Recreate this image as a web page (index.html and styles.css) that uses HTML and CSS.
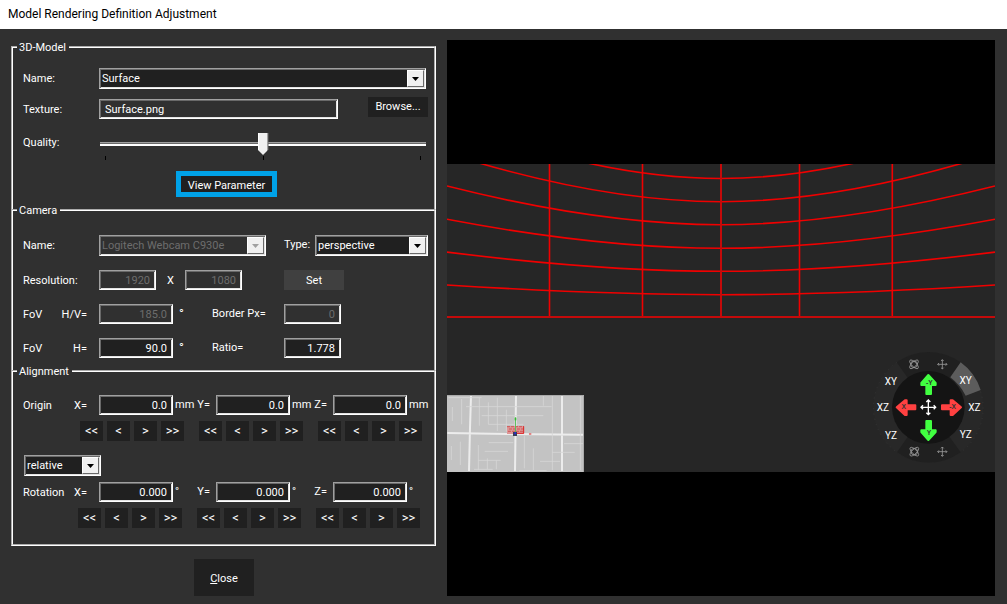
FILE: index.html
```html
<!DOCTYPE html>
<html lang="en">
<head>
<meta charset="utf-8">
<title>Model Rendering Definition Adjustment</title>
<link rel="stylesheet" href="styles.css">
</head>
<body>
<header class="titlebar"><h1>Model Rendering Definition Adjustment</h1></header>
<main class="dialog">
  <form class="settings">
    <fieldset class="group group-model">
      <legend>3D-Model</legend>
      <div class="row">
        <label class="field-label" for="model-name">Name:</label>
        <span class="combo combo-wide"><select id="model-name"><option>Surface</option></select><svg class="arrow" viewBox="0 0 7 4"><path d="M0 0h7L3.500 4z"/></svg></span>
      </div>
      <div class="row row-texture">
        <label class="field-label" for="texture">Texture:</label>
        <input class="box texture" id="texture" type="text" value="Surface.png">
        <button class="btn btn-browse" type="button">Browse...</button>
      </div>
      <div class="row row-quality">
        <label class="field-label" for="quality">Quality:</label>
        <div class="slider">
          <input id="quality" type="range" min="0" max="2" value="1">
          <div class="ticks"><i></i><i></i><i></i></div>
        </div>
      </div>
      <div class="row row-view"><button class="btn btn-view" type="button">View Parameter</button></div>
    </fieldset>

    <fieldset class="group group-camera">
      <legend>Camera</legend>
      <div class="row">
        <label class="field-label" for="camera-name">Name:</label>
        <span class="combo combo-camera"><select id="camera-name" disabled><option>Logitech Webcam C930e</option></select><svg class="arrow" viewBox="0 0 7 4"><path d="M0 0h7L3.500 4z"/></svg></span>
        <label class="type-label" for="type">Type:</label>
        <span class="combo combo-type"><select id="type"><option>perspective</option></select><svg class="arrow" viewBox="0 0 7 4"><path d="M0 0h7L3.500 4z"/></svg></span>
      </div>
      <div class="row">
        <label class="field-label" for="res-w">Resolution:</label>
        <input class="box num small" id="res-w" type="text" value="1920" disabled>
        <label class="times" for="res-h">X</label>
        <input class="box num small" id="res-h" type="text" value="1080" disabled>
        <button class="btn btn-set" type="button">Set</button>
      </div>
      <div class="row">
        <label class="field-label split" for="fov-hv"><span>FoV</span><span>H/V=</span></label>
        <input class="box num" id="fov-hv" type="text" value="185.0" disabled>
        <span class="degree">°</span>
        <label class="side-label" for="border-px">Border Px=</label>
        <input class="box num small" id="border-px" type="text" value="0" disabled>
      </div>
      <div class="row">
        <label class="field-label split" for="fov-h"><span>FoV</span><span>H=</span></label>
        <input class="box num dark" id="fov-h" type="text" value="90.0">
        <span class="degree">°</span>
        <label class="side-label" for="ratio">Ratio=</label>
        <input class="box num small dark" id="ratio" type="text" value="1.778">
      </div>
    </fieldset>

    <fieldset class="group group-align">
      <legend>Alignment</legend>
      <div class="row">
        <label class="field-label split" for="ox"><span>Origin</span><span>X=</span></label>
        <input class="box num dark" id="ox" type="text" value="0.0">
        <label class="unit" for="oy"><span>mm</span><span>Y=</span></label>
        <input class="box num dark" id="oy" type="text" value="0.0">
        <label class="unit" for="oz"><span>mm</span><span>Z=</span></label>
        <input class="box num dark" id="oz" type="text" value="0.0">
        <span class="unit unit-last">mm</span>
      </div>
      <div class="row steps">
        <div class="step"><button type="button">&lt;&lt;</button><button type="button">&lt;</button><button type="button">&gt;</button><button type="button">&gt;&gt;</button></div>
        <div class="step"><button type="button">&lt;&lt;</button><button type="button">&lt;</button><button type="button">&gt;</button><button type="button">&gt;&gt;</button></div>
        <div class="step"><button type="button">&lt;&lt;</button><button type="button">&lt;</button><button type="button">&gt;</button><button type="button">&gt;&gt;</button></div>
      </div>
      <div class="row row-mode">
        <span class="combo combo-mode"><select aria-label="Rotation mode"><option>relative</option></select><svg class="arrow" viewBox="0 0 7 4"><path d="M0 0h7L3.500 4z"/></svg></span>
      </div>
      <div class="row row-rotation">
        <label class="field-label split" for="rx"><span>Rotation</span><span>X=</span></label>
        <input class="box num dark" id="rx" type="text" value="0.000">
        <label class="unit" for="ry"><span>°</span><span>Y=</span></label>
        <input class="box num dark" id="ry" type="text" value="0.000">
        <label class="unit" for="rz"><span>°</span><span>Z=</span></label>
        <input class="box num dark" id="rz" type="text" value="0.000">
        <span class="unit unit-last">°</span>
      </div>
      <div class="row steps steps-rotation">
        <div class="step"><button type="button">&lt;&lt;</button><button type="button">&lt;</button><button type="button">&gt;</button><button type="button">&gt;&gt;</button></div>
        <div class="step"><button type="button">&lt;&lt;</button><button type="button">&lt;</button><button type="button">&gt;</button><button type="button">&gt;&gt;</button></div>
        <div class="step"><button type="button">&lt;&lt;</button><button type="button">&lt;</button><button type="button">&gt;</button><button type="button">&gt;&gt;</button></div>
      </div>
    </fieldset>
    <button class="btn btn-close" type="button"><u>C</u>lose</button>
  </form>

  <section class="preview" aria-label="Model preview">
    <svg class="scene" viewBox="0 0 548 556">
      <defs>
        <clipPath id="band"><rect y="124" width="548" height="308"/></clipPath>
        <g id="atom" fill="none" stroke="#999" stroke-width="2.500">
          <ellipse rx="17" ry="7" transform="rotate(45)"/><ellipse rx="17" ry="7" transform="rotate(-45)"/><circle r="10"/>
        </g>
        <g id="move" fill="none" stroke="#999" stroke-width="2.500">
          <path d="M-14 0H14M0-14V14M-10-4L-14 0L-10 4M10-4L14 0L10 4M-4-10L0-14L4-10M-4 10L0 14L4 10"/>
        </g>
      </defs>
      <rect y="124" width="548" height="308" fill="#262626"/>
      <g clip-path="url(#band)" fill="none" stroke="#f00000" stroke-width="1.600">
        <path d="M0 80.400C91 115 183 138.500 274 138.500S457 115 548 80.400"/>
        <path d="M0 113.300C91 142.100 183 161.700 274 161.700S457 142.100 548 113.300"/>
        <path d="M0 146C91 169 183 184.700 274 184.700S457 169 548 146"/>
        <path d="M0 179.300C91 196.500 183 208.300 274 208.300S457 196.500 548 179.300"/>
        <path d="M0 212.100C91 223.500 183 231.300 274 231.300S457 223.500 548 212.100"/>
        <path d="M0 245C91 250.800 183 254.700 274 254.700S457 250.800 548 245"/>
        <path d="M102.500 124V277M195.500 124V277M352.500 124V277M445.300 124V277"/>
        <path stroke="#c40a0a" stroke-width="2" d="M274 124V277M0 277H548"/>
      </g>

      <g transform="translate(-7 345) scale(.33333)">
        <path fill="#c3c3c3" d="M21 30H432V261H21z"/>
        <path fill="none" stroke="#aaa" stroke-width="3" d="M21 31.500H430.500V261"/>
        <g fill="none" stroke="#ececec" stroke-width="6">
          <path d="M93 33L90 130L87 258M228 33L225 258M366 33V258M22 144L200 147L429 149"/>
        </g>
        <g fill="none" stroke="#d6d6d6" stroke-width="2.500">
          <path d="M25 38H125M78 65H335M125 92H310M145 118H250M146 173H220M134 199H204M115 226H182M102 253H158M238 257H320M372 176H429M337 202H404M300 229H360"/>
          <path d="M37 66V108M65 42V118M118 38V122M145 52V118M172 38V138M199 74V140M310 33V62M337 33V256M421 33V256M34 183V225M61 170V240M115 180V255M142 220V253M169 226V253M253 152V250M280 190V255"/>
        </g>
        <path fill="#dd9595" d="M201 123H252V147H201z"/>
        <path stroke="#cf5858" stroke-width="3" stroke-dasharray="9 3" d="M201 125H252M207 132H252M204 139H252"/>
        <path fill="none" stroke="#d22" stroke-width="3" d="M230 145H251V124M267 147H274"/>
        <path stroke="#5cc05c" stroke-width="3" d="M226.500 97V142"/>
        <path fill="#34bd34" d="M224 98h5v8h-5z"/>
        <path fill="#373b58" d="M219 141h12v12h-12z"/><path fill="#2b2bd8" d="M223 142h5v6h-5z"/>
      </g>

      <g transform="translate(418 305) scale(.33333)">
        <circle cx="190" cy="187" r="165" fill="#282828"/>
        <path fill="#202020" d="M190 187L95 52A165 165 0 0 1 287 52zM190 187L96 322A165 165 0 0 0 287 322z"/>
        <path fill="none" stroke="#343434" stroke-width="3" stroke-dasharray="3 13" d="M95 52A165 165 0 0 0 96 322M347 140A165 165 0 0 1 287 322"/>
        <path fill="#5c5c5c" d="M287 52A165 165 0 0 1 347 135L302 152Q286 120 256 97z"/>
        <circle cx="190" cy="187" r="109" fill="#141414"/>
        <g stroke-linejoin="round" stroke-width="6">
          <path fill="#41ff41" stroke="#41ff41" d="M190 90L212 114V120H198V147H184V120H169V114zM190 285L169 261V256H184V228H198V256H212V261z"/>
          <path fill="#ff4141" stroke="#ff4141" d="M95 187L120 166H125V181H151V193H125V210H120zM288 187L263 210H257V193H231V181H257V166H263z"/>
        </g>
        <g class="axis-letter"><text x="193" y="121">-Y</text><text x="192" y="270">Y</text><text x="116" y="193">X</text><text x="263" y="193">-X</text></g>
        <path fill="none" stroke="#fff" stroke-width="4" d="M169 187H211M190 166V208M174 181L168 187L174 193M206 181L212 187L206 193M184 171L190 165L196 171M184 203L190 209L196 203"/>
        <use href="#atom" x="147" y="58"/><use href="#move" x="232" y="58"/>
        <use href="#atom" x="148" y="320"/><use href="#move" x="232" y="320"/>
        <g class="plane-label"><text x="78" y="119">XY</text><text x="54" y="199">XZ</text><text x="78" y="281">YZ</text><text x="302" y="118">XY</text><text x="328" y="199">XZ</text><text x="302" y="278">YZ</text></g>
      </g>
    </svg>
  </section>
</main>
</body>
</html>
```
FILE: styles.css
```css
* { box-sizing: border-box; }

body {
  margin: 0;
  min-height: 100vh;
  display: flex;
  flex-direction: column;
  background: #303030;
  color: #fff;
  font: 11px/16px Roboto, Tahoma, sans-serif;
}

.titlebar { background: #fff; color: #000; height: 29px; padding: 5px 8px; }
.titlebar h1 { margin: 0; font: 12px/18px Roboto, "Segoe UI", sans-serif; }

.dialog { flex: 1; display: flex; gap: 11px; padding: 10px 12px 8px 11px; }
.settings { flex: 0 0 425px; display: flex; flex-direction: column; }

.group {
  margin: 0 0 -7px;
  padding: 0 0 0 10px;
  min-width: 0;
  border: 2px groove #fff;
  border-bottom: 0;
}
.group legend { margin-left: -6px; padding: 1px 3px 0 2px; height: 16px; }
.group-model { height: 170px; padding-top: 13px; }
.group-camera { height: 168px; padding-top: 17px; }
.group-align { height: 183px; padding-top: 16px; margin: 0; border-bottom: 2px groove #fff; }

.row { display: flex; align-items: center; height: 20px; margin-bottom: 14px; }
.field-label { flex: 0 0 76px; padding-top: 2px; }
.split { display: flex; justify-content: space-between; padding-right: 12px; }

input, select, button { font: inherit; color: inherit; border-radius: 0; outline: 0; }

.box, .combo select {
  border: 1px solid;
  border-color: #a0a0a0 #fff #fff #a0a0a0;
  box-shadow: inset 1px 1px #696969, inset -1px -1px #e3e3e3;
  background: #303030;
}
.box { width: 74px; height: 20px; margin: 0; padding: 0 5px; }
.box.small { width: 57px; }
.box.texture { width: 239px; }
.num { text-align: right; }
.dark { background: #202020; }
.box:disabled, .combo select:disabled { color: #6d6d6d; background: #303030; opacity: 1; }

.combo { position: relative; height: 21px; }
.combo select {
  appearance: none;
  display: block;
  width: 100%;
  height: 21px;
  margin: 0;
  padding: 2px 20px 0 2px;
  background: #202020;
}
.arrow {
  position: absolute;
  top: 2px;
  right: 2px;
  width: 17px;
  height: 17px;
  padding: 6px 4px 5px;
  background: #f0f0f0;
  border: 1px solid;
  border-color: #fff #696969 #696969 #fff;
  pointer-events: none;
}
select:disabled + .arrow { fill: #a0a0a0; }
.combo-wide { width: 327px; }
.combo-camera { width: 167px; }
.combo-type { width: 113px; }
.combo-mode { width: 77px; margin-left: 1px; }
.type-label { width: 49px; padding-left: 18px; }

.btn, .step button { border: 0; padding: 0; background: #202020; text-align: center; }
.btn-browse { width: 60px; height: 20px; margin: 0 0 4px 30px; }
.btn-set { width: 60px; height: 20px; margin-left: 42px; padding-top: 2px; background: #404040; }
.btn-view { width: 101px; height: 26px; padding-top: 2px; border: 5px solid #00a2e8; }
.btn-close { width: 60px; height: 37px; margin: 13px 0 0 183px; padding-top: 2px; }

.group-model .row:first-of-type { margin-bottom: 11px; }
.row-quality { height: 27px; margin-bottom: 11px; align-items: flex-start; }
.row-view { height: 26px; padding-left: 153px; }

.slider { width: 327px; padding-left: 1px; }
.slider input {
  appearance: none;
  display: block;
  width: 100%;
  height: 22px;
  margin: 0;
  background: none;
}
.slider input::-webkit-slider-runnable-track {
  height: 4px;
  background: linear-gradient(#a0a0a0 1px, #696969 1px 2px, #fff 2px);
}
.slider input::-webkit-slider-thumb {
  appearance: none;
  width: 11px;
  height: 22px;
  margin-top: -9px;
  background: linear-gradient(90deg, #fff 1px, #f0f0f0 1px 9px, #a0a0a0 9px 10px, #696969 10px);
  clip-path: polygon(0 0, 100% 0, 100% 75%, 50% 100%, 0 75%);
}
.ticks { display: flex; justify-content: space-between; padding: 1px 5px 0; }
.ticks i { width: 1px; height: 4px; background: #000; }

.group-camera .row:first-of-type { margin-bottom: 15px; }
.times { width: 29px; padding-top: 2px; text-align: center; }
.degree { width: 39px; padding-left: 6px; font-size: 13px; }
.side-label { width: 72px; }

.unit { width: 43px; padding: 0 6px 0 2px; display: flex; justify-content: space-between; }
.unit-last { width: 20px; padding-right: 0; }

.group-align .row { margin-bottom: 6px; }
.group-align .steps { gap: 15px; padding-left: 57px; margin-bottom: 14px; }
.group-align .row-mode { margin-bottom: 7px; }
.group-align .steps-rotation { padding-left: 55px; }
.step { display: flex; gap: 4px; }
.step button { width: 23px; height: 20px; font-size: 13px; }

.preview { flex: 1; min-width: 0; margin-top: 1px; background: #000; display: flex; }
.scene { display: block; width: 100%; height: 100%; }
.plane-label text { font: 30px Roboto, sans-serif; fill: #fff; text-anchor: middle; }
.axis-letter text { font: bold 20px "Liberation Sans", sans-serif; fill: #333; text-anchor: middle; }
```
